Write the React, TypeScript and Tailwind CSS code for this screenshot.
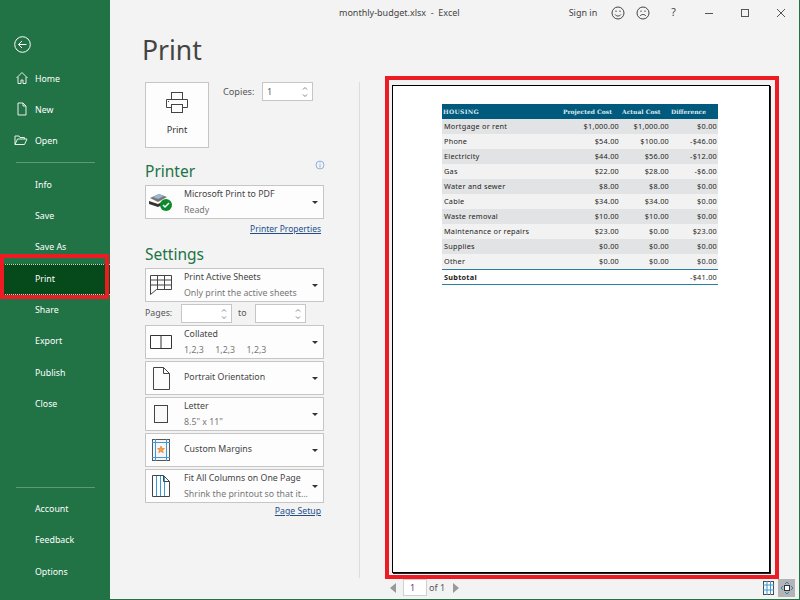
import React from "react";

const F = "font-['Noto_Sans','Open_Sans',sans-serif]";

function Row({ label, active, icon }: { label: string; active?: boolean; icon?: React.ReactNode }) {
  return (
    <div className={`relative flex h-[31.3px] items-center pl-[35px] text-[8.800px] text-white ${active ? "bg-[#064a1c] border-y border-dotted border-[#c8d8c8]" : ""}`}>
      {icon && <span className="absolute left-[15px] top-[7px]">{icon}</span>}
      {label}
    </div>
  );
}

const I = { fill: "none", stroke: "#e8f0ea", strokeWidth: 1 };

function Caret() {
  return <span className="mr-[4px] ml-auto h-0 w-0 shrink-0 border-x-[3px] border-t-[3.5px] border-x-transparent border-t-[#333]" />;
}

function Drop({ icon, a, b }: { icon: React.ReactNode; a: string; b?: string }) {
  return (
    <div className="flex h-[34px] w-[179px] items-center border border-[#c6c6c6] bg-[#fdfdfd] pr-[1px]">
      <span className="mr-[8px] flex w-[30px] shrink-0 justify-center">{icon}</span>
      <div className={`whitespace-pre text-[8.800px] leading-[16px] ${b ? "" : "-mt-[3px]"}`}>
        <div className="text-[#444]">{a}</div>
        {b && <div className="text-[#777]">{b}</div>}
      </div>
      <Caret />
    </div>
  );
}

function Spin({ w, v }: { w: string; v?: string }) {
  return (
    <div className={`flex h-[19px] items-center border border-[#c6c6c6] bg-white pl-[4px] text-[9.200px] text-[#666] ${w}`}>
      {v}
      <svg width="6" height="12" viewBox="0 0 6 12" className="ml-auto mr-[4px]" fill="none" stroke="#666" strokeWidth="0.8">
        <path d="M1 3.500 3 1.500 5 3.500M1 8.500 3 10.500 5 8.500" />
      </svg>
    </div>
  );
}

const data = [
  ["Mortgage or rent", "$1,000.00", "$1,000.00", "$0.00"],
  ["Phone", "$54.00", "$100.00", "-$46.00"],
  ["Electricity", "$44.00", "$56.00", "-$12.00"],
  ["Gas", "$22.00", "$28.00", "-$6.00"],
  ["Water and sewer", "$8.00", "$8.00", "$0.00"],
  ["Cable", "$34.00", "$34.00", "$0.00"],
  ["Waste removal", "$10.00", "$10.00", "$0.00"],
  ["Maintenance or repairs", "$23.00", "$0.00", "$23.00"],
  ["Supplies", "$0.00", "$0.00", "$0.00"],
  ["Other", "$0.00", "$0.00", "$0.00"],
];

export default function App() {
  return (
    <div className={`relative flex h-[600px] w-[800px] overflow-hidden border-b border-r border-[#217346] bg-[#f3f3f3] ${F}`}>
      <aside className="flex w-[110px] shrink-0 flex-col bg-[#217346]">
        <div className="flex h-[63.500px] items-end pb-[11px] pl-[14px]">
          <svg width="17" height="17" viewBox="0 0 17 17" fill="none" stroke="#fff" strokeWidth="1">
            <circle cx="8.500" cy="8.500" r="7.800" />
            <path d="M12.500 8.500H4.500M8 5 4.500 8.500 8 12" />
          </svg>
        </div>
        <Row label="Home" icon={<svg width="14" height="14" viewBox="0 0 14 14" {...I}><path d="M1.500 7 7 1.500 12.500 7M3 6v6.500h3V9h2v3.500h3V6" /></svg>} />
        <Row label="New" icon={<svg width="14" height="14" viewBox="0 0 14 14" {...I}><path d="M3 1h5l3 3v9H3zM8 1v3h3" /></svg>} />
        <Row label="Open" icon={<svg width="14" height="14" viewBox="0 0 14 14" className="-ml-[1px]" {...I}><path d="M1 11.500V3h4l1 1.500h4.500V6M1 11.500h9.500L13 6H3.500z" /></svg>} />
        <div className="ml-[16px] mb-[6.700px] mt-[4.700px] h-[1px] w-[79px] bg-[#5c9a78]" />
        <Row label="Info" />
        <Row label="Save" />
        <Row label="Save As" />
        <Row label="Print" active />
        <Row label="Share" />
        <Row label="Export" />
        <Row label="Publish" />
        <Row label="Close" />
        <div className="mt-auto ml-[16px] mb-[6.500px] h-[1px] w-[79px] bg-[#5c9a78]" />
        <Row label="Account" />
        <Row label="Feedback" />
        <Row label="Options" />
        <div className="h-[11px]" />
      </aside>

      <main className="flex min-w-0 flex-1 flex-col">
        <header className="flex h-[26px] shrink-0 items-center text-[9px] text-[#444]">
          <span className="ml-[229px] whitespace-pre">monthly-budget.xlsx  -  Excel</span>
          <span className="ml-[109px]">Sign in</span>
          <svg width="14" height="14" viewBox="0 0 14 14" className="ml-[14px]" fill="none" stroke="#444"><circle cx="7" cy="7" r="6" /><path d="M4 8.500c1.500 2 4.500 2 6 0" /><path d="M5 4.500v1.500M9 4.500v1.500" /></svg>
          <svg width="14" height="14" viewBox="0 0 14 14" className="ml-[11px]" fill="none" stroke="#444"><circle cx="7" cy="7" r="6" /><path d="M4 10c1.500-2 4.500-2 6 0" /><path d="M5 4.500v1.500M9 4.500v1.500" /></svg>
          <span className="ml-[21px] text-[10.500px]">?</span>
          <svg width="10" height="10" viewBox="0 0 10 10" className="ml-[28px]" fill="none" stroke="#555"><path d="M1 5.500h8" /></svg>
          <svg width="10" height="10" viewBox="0 0 10 10" className="ml-[26px]" fill="none" stroke="#555"><rect x="1.500" y="1.500" width="7" height="7" /></svg>
          <svg width="10" height="10" viewBox="0 0 10 10" className="ml-[26px]" fill="none" stroke="#555"><path d="M1 1 9 9M9 1 1 9" /></svg>
        </header>

        <div className="flex min-h-0 flex-1">
          <section className="w-[250px] shrink-0">
            <h1 className="ml-[32px] mt-[5px] h-[51px] text-[26.500px] leading-[38px] text-[#444]">Print</h1>
            <div className="ml-[35px] flex w-[179px] flex-col">
              <div className="flex h-[66px] items-start">
                <div className="flex h-[66px] w-[64px] shrink-0 flex-col items-center border border-[#c6c6c6] bg-[#fdfdfd] pt-[8px] text-[9.200px] text-[#333]">
                  <svg width="24" height="24" viewBox="0 0 24 24" fill="none" stroke="#444" strokeWidth="1">
                    <rect x="6.500" y="1.500" width="11" height="7" />
                    <path d="M6.500 16.500H1.500V8.500h21v8h-5" />
                    <rect x="6.500" y="13.500" width="11" height="8" />
                    <path d="M3 10.500h1" />
                  </svg>
                  <span className="mt-[8px]">Print</span>
                </div>
                <span className="ml-[14px] mt-[3px] w-[39px] shrink-0 text-[9.200px] text-[#555]">Copies:</span>
                <Spin w="w-[51px]" v="1" />
              </div>
              <div className="relative mt-[12px] h-[25px] text-[15.500px] leading-[22px] text-[#217346]">
                Printer
                <svg width="10" height="10" viewBox="0 0 10 10" className="absolute right-[-1px] top-0" fill="none" stroke="#8db2dc"><circle cx="5" cy="5" r="4" /><path d="M5 4.500V7.500M5 2.500v1" /></svg>
              </div>
              <Drop
                a="Microsoft Print to PDF"
                b="Ready"
                icon={
                  <svg width="24" height="20" viewBox="0 0 24 20">
                    <path d="M1 6 10 2l8 3-9 5z" fill="#777" />
                    <path d="M0 9l9 3 8-4v3l-8 4-9-3z" fill="#333" />
                    <path d="M4 5l6-3 5 2-6 3z" fill="#9ab8cf" />
                    <circle cx="17" cy="13" r="6" fill="#0b8a2c" />
                    <path d="M14 13l2 2 4-4" fill="none" stroke="#fff" strokeWidth="1.500" />
                  </svg>
                }
              />
              <a className="mt-[2px] h-[15px] self-end pr-[3px] text-[8.500px] leading-[15px] text-[#1f4e8a] underline">Printer Properties</a>
              <div className="mt-[4px] h-[28px] text-[15.500px] leading-[28px] text-[#217346]">Settings</div>
              <Drop
                a="Print Active Sheets"
                b="Only print the active sheets"
                icon={
                  <svg width="22" height="20" viewBox="0 0 22 20" fill="none" stroke="#444">
                    <path d="M0.500 0.500h21v14h-15l-6 5zM0.500 5h21M0.500 10h21M7.500 0.500v14M14.500 0.500v14" />
                  </svg>
                }
              />
              <div className="my-[2px] flex h-[19px] items-center text-[8.800px] text-[#555]">
                <span className="w-[36px] shrink-0">Pages:</span>
                <Spin w="w-[51px]" />
                <span className="ml-[6px] w-[17px] shrink-0">to</span>
                <Spin w="w-[51px]" />
              </div>
              <Drop
                a="Collated"
                b="1,2,3     1,2,3     1,2,3"
                icon={
                  <svg width="22" height="14" viewBox="0 0 22 14" fill="none" stroke="#333"><path d="M0.500 0.500h21v13h-21zM11 0.500v13" /></svg>
                }
              />
              <div className="mt-[2px]">
                <Drop
                  a="Portrait Orientation"
                  icon={<svg width="17" height="23" viewBox="0 0 17 23" fill="none" stroke="#444"><path d="M0.500 0.500h10l6 6v16h-16zM10.500 0.500v6h6" /></svg>}
                />
              </div>
              <div className="mt-[2px]">
                <Drop
                  a="Letter"
                  b={'8.5" x 11"'}
                  icon={<svg width="14" height="18" viewBox="0 0 14 18" fill="#fafafa" stroke="#444"><rect x="0.500" y="0.500" width="13" height="17" /></svg>}
                />
              </div>
              <div className="mt-[2px]">
                <Drop
                  a="Custom Margins"
                  icon={
                    <svg width="18" height="22" viewBox="0 0 18 22" fill="#f5f5f5">
                      <rect x="0.500" y="0.500" width="17" height="21" stroke="#555" />
                      <path d="M3.500 0v22M14.500 0v22M0 3.500h18M0 18.500h18" stroke="#3a9ad9" />
                      <path d="M9 7l1 2.500h2.500l-2 1.700.8 2.600L9 12.300l-2.300 1.500.8-2.600-2-1.700H8z" fill="#f4a340" stroke="#d9661f" strokeWidth="0.500" />
                    </svg>
                  }
                />
              </div>
              <div className="mt-[2px]">
                <Drop
                  a="Fit All Columns on One Page"
                  b="Shrink the printout so that it..."
                  icon={
                    <svg width="18" height="22" viewBox="0 0 18 22" fill="none">
                      <path d="M4.500 1v20M8.500 1v20M12.500 1v20" stroke="#3a9ad9" />
                      <path d="M0.500 0.500h11l6 6v15h-17zM11.500 0.500v6h6" stroke="#444" />
                    </svg>
                  }
                />
              </div>
              <a className="mt-[1px] h-[15px] self-end pr-[3px] text-[8.700px] leading-[15px] text-[#1f4e8a] underline">Page Setup</a>
            </div>
          </section>

          <section className="flex min-w-0 flex-1 flex-col">
            <div className="ml-[-1px] mt-[56px] flex h-[496px] border-l border-[#dcdcdc] pl-[32px]">
              <div className="mt-[3px] h-[488px] w-[378px] border border-black bg-white pl-[49px] pr-[51px] pt-[18px] shadow-[1px_1px_0_#222]">
                <div className="flex h-[14.500px] items-center bg-[#005a7d] pl-[1px] font-['DejaVu_Serif',serif] text-[6px] font-bold text-[#dfe9ee]">
                  <span className="tracking-[0.3px]">HOUSING</span>
                  <span className="ml-auto w-[51px] whitespace-nowrap text-right">Projected Cost</span>
                  <span className="ml-[10px] w-[38px] whitespace-nowrap text-right">Actual Cost</span>
                  <span className="ml-[11px] mr-[12px] w-[35px] whitespace-nowrap text-right">Difference</span>
                </div>
                {data.map((r, i) => (
                  <div key={r[0]} className={`flex h-[15.100px] items-center pl-[2px] pr-[1px] text-[7.300px] tracking-[0.250px] text-[#222] ${i % 2 === 0 ? "bg-[#e2e3e4]" : "bg-[#f2f2f2]"}`}>
                    <span className="flex-1 whitespace-nowrap">{r[0]}</span>
                    <span className="w-[50px] text-right">{r[1]}</span>
                    <span className="w-[50px] text-right">{r[2]}</span>
                    <span className="w-[48px] text-right">{r[3]}</span>
                  </div>
                ))}
                <div className="flex h-[16px] items-center border-y border-[#2a7f9e] pl-[2px] pr-[1px] text-[7.300px] tracking-[0.250px] text-[#222]">
                  <span className="font-bold">Subtotal</span>
                  <span className="ml-auto">-$41.00</span>
                </div>
              </div>
            </div>
            <div className="flex h-[19px] items-center pl-[30px] text-[9px] text-[#555]">
              <span className="h-0 w-0 border-y-[5.500px] border-r-[6px] border-y-transparent border-r-[#999]" />
              <span className="ml-[7px] flex h-[17px] w-[24px] items-center border border-[#d0d0d0] bg-white pl-[6px] text-[#6a3a8c]">1</span>
              <span className="ml-[2px] w-[15px] whitespace-nowrap">of 1</span>
              <span className="ml-[9px] h-0 w-0 border-y-[5.500px] border-l-[6px] border-y-transparent border-l-[#999]" />
              <svg width="11" height="14" viewBox="0 0 11 14" className="ml-[304px] shrink-0" fill="#fafafa"><rect x="0.500" y="0.500" width="10" height="13" stroke="#4a4a4a" /><path d="M4 0v14M7.500 0v14M0 4h11M0 9h11" stroke="#3a9ad9" /></svg>
              <span className="ml-[4px] flex h-[18px] w-[17px] shrink-0 items-center justify-center bg-[#b4b4b4]">
                <svg width="14" height="14" viewBox="0 0 14 14" fill="none"><rect x="4.500" y="4.500" width="5" height="5" stroke="#333" fill="#fff" /><path d="M5 3 7 1l2 2M5 11l2 2 2-2M3 5 1 7l2 2M11 5l2 2-2 2" stroke="#1f86c9" /></svg>
              </span>
            </div>
          </section>
        </div>
      </main>

      <div className="pointer-events-none absolute left-0 top-[254px] h-[45px] w-[109px] border-[4px] border-[#ed1c24]" />
      <div className="pointer-events-none absolute left-[385px] top-[76px] h-[503px] w-[394px] border-[4px] border-[#ed1c24]" />
    </div>
  );
}
